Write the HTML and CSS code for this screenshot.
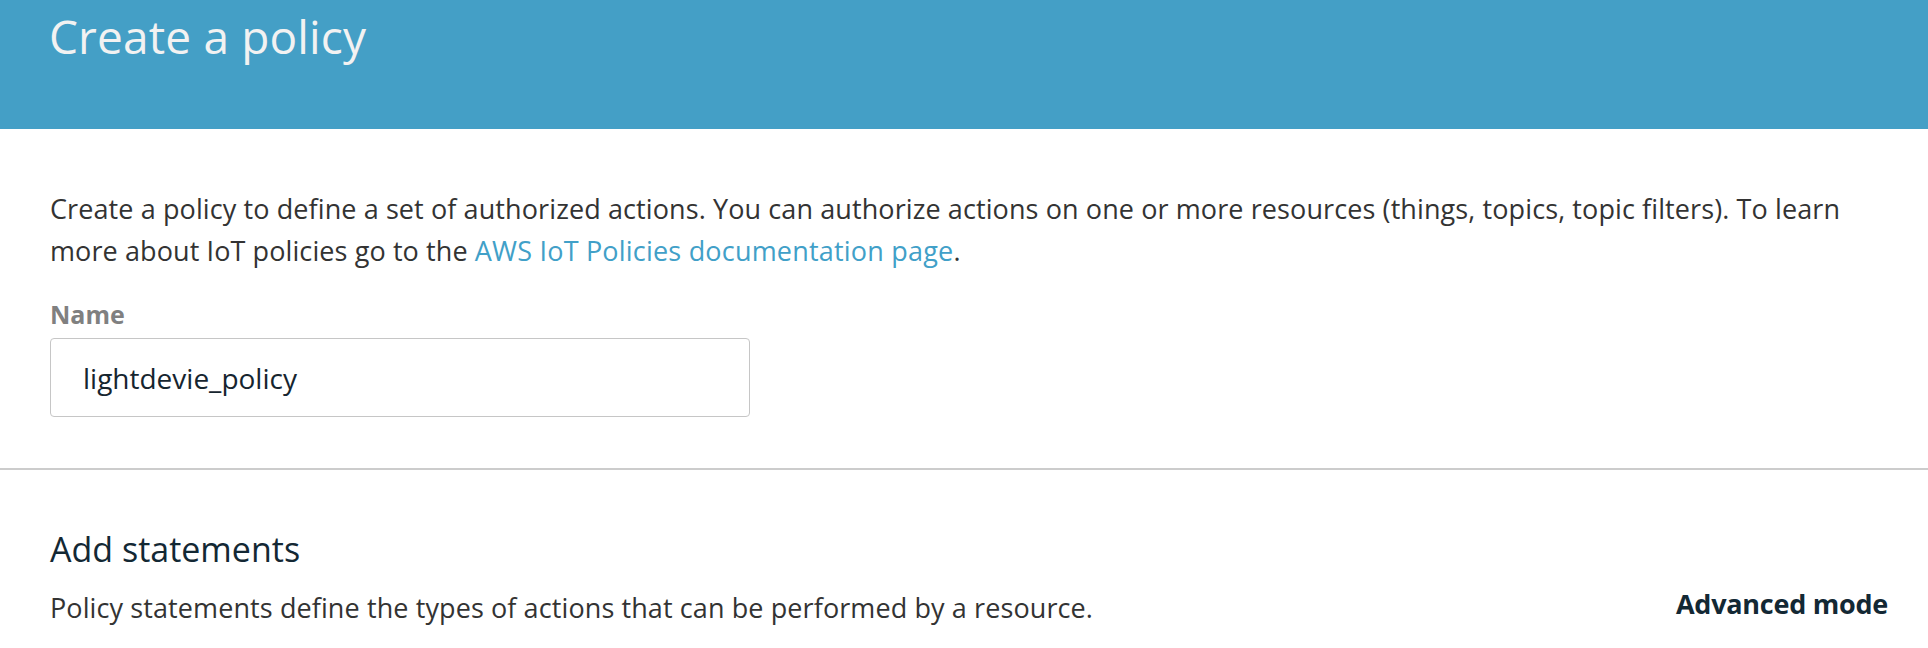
FILE: index.html
```html
<!DOCTYPE html>
<html lang="en">
<head>
<meta charset="utf-8">
<title>Create a policy</title>
<link rel="stylesheet" href="styles.css">
</head>
<body>
<header class="page-header">
  <h1 class="page-title">Create a policy</h1>
</header>
<main>
  <section class="section section-form">
    <p class="intro">Create a policy to define a set of authorized actions. You can authorize actions on one or more resources (things, topics, topic filters). To learn more about IoT policies go to the <a class="link" href="#">AWS IoT Policies documentation page</a>.</p>
    <label class="field-label" for="policy-name">Name</label>
    <input class="text-input" id="policy-name" type="text" value="lightdevie_policy">
  </section>
  <section class="section section-statements">
    <h2 class="section-title">Add statements</h2>
    <div class="statements-row">
      <p class="statements-desc">Policy statements define the types of actions that can be performed by a resource.</p>
      <span class="mode-toggle">Advanced mode</span>
    </div>
  </section>
</main>
</body>
</html>
```
FILE: styles.css
```css
* { box-sizing: border-box; }
html, body { margin: 0; padding: 0; background: #ffffff; }
body {
  font-family: "Open Sans", "Noto Sans", sans-serif;
  color: #333333;
  overflow: hidden;
}
.page-header {
  background: #449fc6;
  height: 129px;
  padding: 8px 49px 0;
}
.page-title {
  margin: 0;
  font-size: 46px;
  line-height: 56px;
  font-weight: 400;
  letter-spacing: 0.15px;
  color: #f2f2f2;
}
.section { padding: 0 40px 0 50px; }
.section-form {
  padding-top: 59px;
  padding-bottom: 51px;
  border-bottom: 2px solid #cccccc;
  display: flex;
  flex-direction: column;
  align-items: flex-start;
}
.intro {
  margin: 0;
  font-size: 27px;
  line-height: 42px;
  letter-spacing: 0.1px;
  color: #333333;
}
.link { color: #41a0c8; text-decoration: none; letter-spacing: 0.2px; }
.field-label {
  margin-top: 27px;
  font-size: 25px;
  line-height: 30px;
  font-weight: 700;
  color: #808080;
}
.text-input {
  margin-top: 9px;
  width: 700px;
  height: 79px;
  border: 1px solid #c6c6c6;
  border-radius: 4px;
  padding: 0 32px;
  font-family: "Open Sans", "Noto Sans", sans-serif;
  font-size: 28px;
  color: #16252f;
  background: #ffffff;
  outline: none;
}
.section-statements { padding-top: 59px; }
.section-title {
  margin: 0;
  font-size: 34px;
  line-height: 40px;
  font-weight: 400;
  color: #132834;
}
.statements-row {
  margin-top: 21px;
  display: flex;
  justify-content: space-between;
  align-items: flex-start;
}
.statements-desc {
  margin: 0;
  font-size: 27px;
  line-height: 36px;
  letter-spacing: 0.1px;
  color: #333333;
}
.mode-toggle {
  font-size: 27px;
  line-height: 27px;
  font-weight: 700;
  letter-spacing: -0.25px;
  color: #132834;
}
```
